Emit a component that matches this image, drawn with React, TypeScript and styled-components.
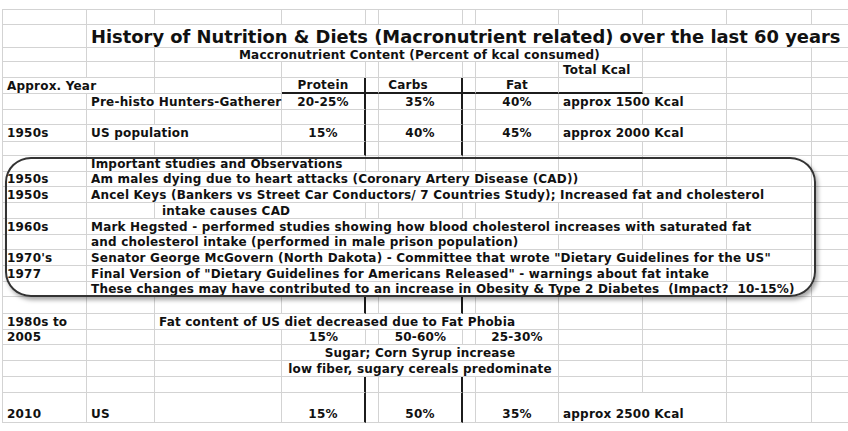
import React from 'react';
import styled, { createGlobalStyle } from 'styled-components';

const Global = createGlobalStyle`
  html, body { margin: 0; padding: 0; background: #fff; overflow: hidden; }
  #root { width: 848px; height: 431px; overflow: hidden; }
`;

const COLS = [84, 68, 127, 84, 13, 84, 13, 83, 84, 84, 85, 40];
const ROWS = [15, 23, 14, 16, 16, 16, 15, 17, 14, 16, 15, 16, 16, 16, 15, 16, 16, 15, 17, 16, 15, 16, 16, 16, 30];

const Page = styled.div`
  padding: 10px 0 0 3px;
  font-family: 'DejaVu Sans', Verdana, sans-serif;
  font-weight: 700;
  color: #111;
`;

const Sheet = styled.div`
  position: relative;
  display: grid;
  grid-template-columns: ${COLS.map((c) => c + 'px').join(' ')};
  grid-template-rows: ${ROWS.map((r) => r + 'px').join(' ')};
  width: max-content;
  border-top: 1px solid #d3d3d3;
  border-left: 1px solid #d3d3d3;
  margin-top: -1px;
  margin-left: -1px;
`;

const Cell = styled.div<{
  $span: number;
  $center?: boolean;
  $thickR?: boolean;
  $thickB?: boolean;
  $pl: number;
  $pr: number;
  $bottom?: boolean;
  $big?: boolean;
}>`
  box-sizing: border-box;
  grid-column: span ${(p) => p.$span};
  border-right: ${(p) => (p.$thickR ? '2px solid #1c1c1c' : '1px solid #d3d3d3')};
  border-bottom: ${(p) => (p.$thickB ? '2px solid #1c1c1c' : '1px solid #d3d3d3')};
  display: flex;
  align-items: ${(p) => (p.$bottom ? 'flex-end' : 'center')};
  justify-content: ${(p) => (p.$center ? 'center' : 'flex-start')};
  padding: ${(p) => (p.$big ? 2 : 0)}px ${(p) => p.$pr}px ${(p) => (p.$bottom ? 2 : 0)}px ${(p) => p.$pl}px;
  white-space: pre;
  font-size: ${(p) => (p.$big ? '17.9px' : '12px')};
  letter-spacing: ${(p) => (p.$big ? '0' : '0.2px')};
  line-height: 1;
  min-width: 0;
  overflow: visible;
`;

const Callout = styled.div`
  position: absolute;
  left: 2px;
  top: 147px;
  width: 811px;
  height: 140px;
  box-sizing: border-box;
  border: 2px solid #333;
  border-radius: 26px / 25px;
  box-shadow: 2px 3px 4px rgba(0, 0, 0, 0.35);
  pointer-events: none;
`;

type Spec = {
  col: number;
  span?: number;
  text?: string;
  center?: boolean;
  pl?: number;
  pr?: number;
  big?: boolean;
};
type RowSpec = { cells: Spec[]; thick?: boolean; bottom?: boolean; underline?: boolean };

const TITLE = 'History of Nutrition & Diets (Macronutrient related) over the last 60 years';

const DATA: RowSpec[] = [
  { cells: [] },
  { cells: [{ col: 1, span: 11, text: TITLE, big: true }] },
  { cells: [{ col: 2, span: 7, text: 'Maccronutrient Content (Percent of kcal consumed)', center: true, pl: 42 }] },
  { cells: [{ col: 8, text: 'Total Kcal' }] },
  {
    thick: true,
    underline: true,
    cells: [
      { col: 0, span: 2, text: 'Approx. Year' },
      { col: 3, text: 'Protein', center: true },
      { col: 5, text: 'Carbs', center: true, pl: 0, pr: 24 },
      { col: 7, text: 'Fat', center: true },
    ],
  },
  {
    thick: true,
    cells: [
      { col: 1, span: 2, text: 'Pre-histo Hunters-Gatherer' },
      { col: 3, text: '20-25%', center: true },
      { col: 5, text: '35%', center: true },
      { col: 7, text: '40%', center: true },
      { col: 8, span: 2, text: 'approx 1500 Kcal' },
    ],
  },
  { thick: true, cells: [] },
  {
    thick: true,
    cells: [
      { col: 0, text: '1950s' },
      { col: 1, span: 2, text: 'US population' },
      { col: 3, text: '15%', center: true },
      { col: 5, text: '40%', center: true },
      { col: 7, text: '45%', center: true },
      { col: 8, span: 2, text: 'approx 2000 Kcal' },
    ],
  },
  { thick: true, cells: [] },
  { cells: [{ col: 1, span: 3, text: 'Important studies and Observations' }] },
  {
    cells: [
      { col: 0, text: '1950s' },
      { col: 1, span: 8, text: 'Am males dying due to heart attacks (Coronary Artery Disease (CAD))' },
    ],
  },
  {
    cells: [
      { col: 0, text: '1950s' },
      { col: 1, span: 10, text: 'Ancel Keys (Bankers vs Street Car Conductors/ 7 Countries Study); Increased fat and cholesterol' },
    ],
  },
  { cells: [{ col: 2, span: 2, text: 'intake causes CAD', pl: 7 }] },
  {
    cells: [
      { col: 0, text: '1960s' },
      { col: 1, span: 10, text: 'Mark Hegsted - performed studies showing how blood cholesterol increases with saturated fat' },
    ],
  },
  { cells: [{ col: 1, span: 7, text: 'and cholesterol intake (performed in male prison population)' }] },
  {
    cells: [
      { col: 0, text: "1970's" },
      { col: 1, span: 10, text: 'Senator George McGovern (North Dakota) - Committee that wrote "Dietary Guidelines for the US"' },
    ],
  },
  {
    cells: [
      { col: 0, text: '1977' },
      { col: 1, span: 9, text: 'Final Version of "Dietary Guidelines for Americans Released" - warnings about fat intake' },
    ],
  },
  {
    cells: [
      { col: 1, span: 10, text: 'These changes may have contributed to an increase in Obesity & Type 2 Diabetes  (Impact?  10-15%)' },
    ],
  },
  { thick: true, cells: [] },
  {
    cells: [
      { col: 0, text: '1980s to' },
      { col: 2, span: 6, text: 'Fat content of US diet decreased due to Fat Phobia' },
    ],
  },
  {
    cells: [
      { col: 0, text: '2005' },
      { col: 3, text: '15%', center: true },
      { col: 5, text: '50-60%', center: true },
      { col: 7, text: '25-30%', center: true },
    ],
  },
  { cells: [{ col: 3, span: 5, text: 'Sugar; Corn Syrup increase', center: true }] },
  { cells: [{ col: 3, span: 5, text: 'low fiber, sugary cereals predominate', center: true }] },
  { thick: true, cells: [] },
  {
    thick: true,
    bottom: true,
    cells: [
      { col: 0, text: '2010' },
      { col: 1, text: 'US' },
      { col: 3, text: '15%', center: true },
      { col: 5, text: '50%', center: true },
      { col: 7, text: '35%', center: true },
      { col: 8, span: 2, text: 'approx 2500 Kcal' },
    ],
  },
];

function expand(r: RowSpec): Spec[] {
  const out: Spec[] = [];
  let c = 0;
  while (c < COLS.length) {
    const found = r.cells.find((s) => s.col === c);
    if (found) {
      out.push(found);
      c += found.span ?? 1;
    } else {
      out.push({ col: c });
      c += 1;
    }
  }
  return out;
}

export default function App() {
  return (
    <>
      <Global />
      <Page>
        <Sheet>
          {DATA.map((r, ri) =>
            expand(r).map((s) => {
              const span = s.span ?? 1;
              const end = s.col + span - 1;
              return (
                <Cell
                  key={`${ri}-${s.col}`}
                  $span={span}
                  $center={s.center}
                  $thickR={!!r.thick && (end === 3 || end === 5)}
                  $thickB={!!r.underline && s.col >= 3 && end <= 8}
                  $pl={s.pl ?? (s.center ? 0 : 4)}
                  $pr={s.pr ?? 0}
                  $bottom={r.bottom}
                  $big={s.big}
                >
                  {s.text ?? ''}
                </Cell>
              );
            })
          )}
          <Callout />
        </Sheet>
      </Page>
    </>
  );
}
